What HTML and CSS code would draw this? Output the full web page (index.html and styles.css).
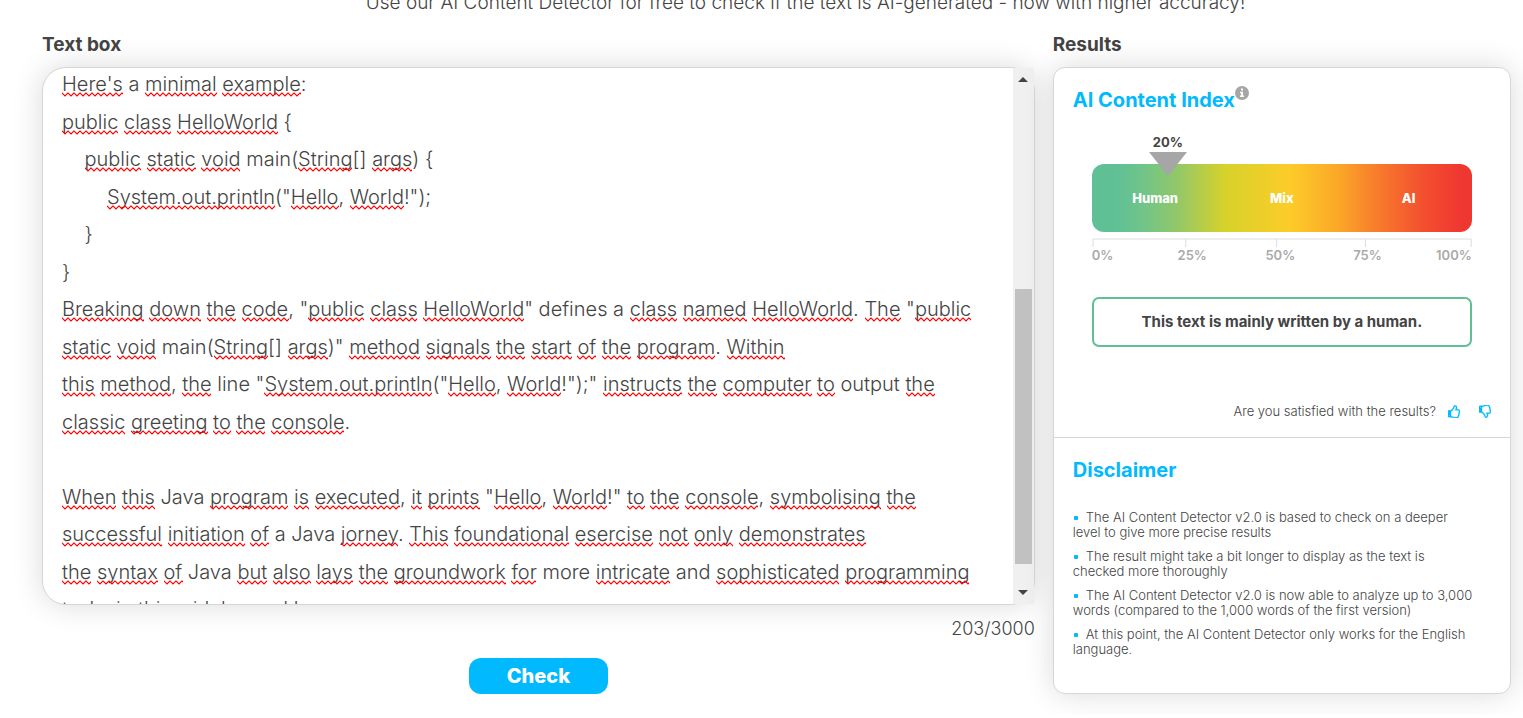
FILE: index.html
```html
<!DOCTYPE html>
<html lang="en">
<head>
<meta charset="utf-8">
<meta name="viewport" content="width=device-width, initial-scale=1">
<title>AI Content Detector</title>
<link rel="stylesheet" href="styles.css">
</head>
<body>
<p class="intro">Use our AI Content Detector for free to check if the text is AI-generated - now with higher accuracy!</p>
<main class="layout">
  <section class="editor">
    <label class="heading" for="source">Text box</label>
    <div class="field">
      <div class="pane">
        <textarea class="source" id="source" spellcheck="false">










Here's a minimal example:
public class HelloWorld {
    public static void main(String[] args) {
        System.out.println("Hello, World!");
    }
}
Breaking down the code, "public class HelloWorld" defines a class named HelloWorld. The "public
static void main(String[] args)" method signals the start of the program. Within
this method, the line "System.out.println("Hello, World!");" instructs the computer to output the
classic greeting to the console.

When this Java program is executed, it prints "Hello, World!" to the console, symbolising the
successful initiation of a Java jorney. This foundational esercise not only demonstrates
the syntax of Java but also lays the groundwork for more intricate and sophisticated programming
tasks in this widely used language.</textarea>
        <div class="mirror" id="mirror" aria-hidden="true"></div>
        <svg class="marks" aria-hidden="true">
          <defs><pattern id="wave" width="6" height="5" patternUnits="userSpaceOnUse"><path d="M-1 0.500L0 1L3 4L6 1L7 0.500" fill="none" stroke="#f00" stroke-width="1.200"/></pattern></defs>
          <g id="marks"></g>
        </svg>
      </div>
      <div class="scrollbar" aria-hidden="true">
        <svg class="step" viewBox="0 0 21 18"><path d="M5 14l5-5 5 5z"/></svg>
        <div class="track"><div class="thumb" id="thumb-bar"></div></div>
        <svg class="step" viewBox="0 0 21 18"><path d="M5 4l5 5 5-5z"/></svg>
      </div>
    </div>
    <div class="counter">203/3000</div>
    <button class="check" type="button">Check</button>
  </section>

  <section class="results">
    <h2 class="heading">Results</h2>
    <div class="card">
      <div class="index">
        <h3 class="title">AI Content Index<svg class="info" viewBox="0 0 14 14" aria-hidden="true"><circle cx="7" cy="7" r="7" fill="#a6a6a6"/><path fill="#fff" d="M6 2.500h2v2H6zM5 5.800h3v3.700h1V11H5V9.500h1V7.200H5z"/></svg></h3>
        <div class="gauge">
          <div class="bar">
            <span>Human</span><span>Mix</span><span>AI</span>
            <div class="marker" style="left:20%">
              <span class="value">20%</span>
              <svg class="arrow" viewBox="0 0 38 24" aria-hidden="true"><path fill="#a6a6a6" d="M0 0h38L19 24z"/></svg>
            </div>
          </div>
          <svg class="ticks" viewBox="0 0 381 9" preserveAspectRatio="none" aria-hidden="true"><path d="M1 9V1h379v8M94 1v8M185 1v8M274 1v8" fill="none" stroke="#ddd"/></svg>
          <div class="scale"><span>0%</span><span>25%</span><span>50%</span><span>75%</span><span>100%</span></div>
          <p class="verdict">This text is mainly written by a human.</p>
        </div>
        <div class="feedback">
          <span>Are you satisfied with the results?</span>
          <button class="vote" type="button" aria-label="Yes"><svg viewBox="0 0 1536 1600" aria-hidden="true"><path id="thumb" d="M256 1344q0-26-19-45t-45-19-45 19-19 45 19 45 45 19 45-19 19-45zm1152-576q0-51-39-89.500t-89-38.500h-352q0-58 48-159.500t48-160.500q0-98-32-145t-128-47q-26 26-38 85t-30.500 125.500-59.500 109.500q-22 23-77 91-4 5-23 30t-31.500 41-34.500 42.500-40 44-38.500 35.500-40 27-35.500 9h-32v640h32q13 0 31.500 3t33 6.500 38 11 35 11.500 35.500 12.500 29 10.500q211 73 342 73h121q192 0 192-167 0-26-5-56 30-16 47.500-52.500t17.500-73.500-18-69q53-50 53-119 0-25-10-55.500t-25-47.500q32-1 53.500-47t21.500-81zm128-1q0 89-49 163 9 33 9 69 0 77-38 144 3 21 3 43 0 101-60 178 1 139-85 219.500t-227 80.500h-129q-96 0-189.500-22.500t-216.500-65.500q-116-40-138-40h-288q-53 0-90.500-37.500t-37.500-90.500v-640q0-53 37.500-90.500t90.500-37.500h274q36-24 137-155 58-75 107-128 24-25 35.500-85.500t30.500-126.500 62-108q39-37 90-37 84 0 151 32.500t102 101.500 35 186q0 93-48 192h176q104 0 180 76t76 179z"/></svg></button>
          <button class="vote" type="button" aria-label="No"><svg viewBox="0 0 1536 1600" aria-hidden="true"><use href="#thumb" transform="translate(0 1600) scale(1 -1)"/></svg></button>
        </div>
      </div>
      <div class="disclaimer">
        <h3 class="title">Disclaimer</h3>
        <ul class="notes">
          <li>The AI Content Detector v2.0 is based to check on a deeper level to give more precise results</li>
          <li>The result might take a bit longer to display as the text is checked more thoroughly</li>
          <li>The AI Content Detector v2.0 is now able to analyze up to 3,000 words (compared to the 1,000 words of the first version)</li>
          <li>At this point, the AI Content Detector only works for the English language.</li>
        </ul>
      </div>
    </div>
  </section>
</main>
<script src="editor.js"></script>
</body>
</html>
```

FILE: styles.css
```css
* { box-sizing: border-box; }

body {
  margin: 0;
  background: #fff;
  color: #444;
  font-family: Inter, "Liberation Sans", sans-serif;
  overflow-x: hidden;
}

h2, h3, p, ul { margin: 0; padding: 0; }

button { border: 0; font-family: inherit; cursor: pointer; }

.intro {
  margin-top: -9px;
  padding: 0 12px 0 100px;
  font-size: 19px;
  font-weight: 300;
  line-height: 24px;
  text-align: center;
}

.layout {
  display: grid;
  grid-template-columns: minmax(0, 13fr) minmax(0, 6fr);
  gap: 18px;
  padding: 18px 12px 20px 42px;
}

.editor, .results { display: flex; flex-direction: column; }

.heading {
  margin-bottom: 10px;
  font-size: 19px;
  font-weight: 700;
  line-height: 24px;
}

.field {
  display: grid;
  grid-template-columns: minmax(0, 1fr) 21px;
  height: 538px;
  border: 1px solid #d6d6d6;
  border-radius: 24px;
  background: #fff;
  box-shadow: 0 0 30px rgba(0, 0, 0, 0.15);
}

.pane {
  position: relative;
  min-height: 0;
  border-radius: 23px 0 0 23px;
  overflow: hidden;
}

.source, .mirror {
  display: block;
  width: 100%;
  margin: 0;
  padding: 20px 0 18px 19px;
  border: 0;
  font: 300 20px/1.875 Inter, "Liberation Sans", sans-serif;
  white-space: pre-wrap;
  overflow-wrap: break-word;
}

.source {
  height: 100%;
  color: #444;
  background: transparent;
  outline: 0;
  resize: none;
  scrollbar-width: none;
}

/* Measures where each word falls; empty once the marks are drawn. */
.mirror { position: absolute; top: 0; left: 0; visibility: hidden; }

.marks {
  position: absolute;
  top: 0;
  left: 0;
  width: 100%;
  height: 100%;
  pointer-events: none;
}

.scrollbar {
  display: flex;
  flex-direction: column;
  min-height: 0;
  background: #f0f0f0;
}

.step { display: block; width: 21px; height: 18px; fill: #444; }

.track { flex: 1; min-height: 0; padding: 0 2px; }

.thumb { position: relative; background: #c1c1c1; }

.counter {
  margin-top: 12px;
  font-size: 18px;
  font-weight: 300;
  line-height: 24px;
  text-align: right;
}

.check {
  align-self: center;
  width: 139px;
  height: 36px;
  margin-top: 17px;
  border-radius: 12px;
  background: #00b9ff;
  color: #fff;
  font-size: 20px;
  font-weight: 800;
}

.card {
  border: 1px solid #d6d6d6;
  border-radius: 12px;
  background: #fff;
  box-shadow: 0 0 30px rgba(0, 0, 0, 0.15);
}

.index { padding: 18px 19px 17px; border-bottom: 1px solid #d6d6d6; }

.title {
  color: #00b9ff;
  font-size: 20px;
  font-weight: 700;
  line-height: 24px;
}

.info { width: 14px; height: 14px; vertical-align: 7px; }

.gauge { padding: 52px 19px 0; }

.bar {
  position: relative;
  display: grid;
  grid-template-columns: repeat(3, 1fr);
  align-items: center;
  height: 68px;
  border-radius: 12px;
  background: linear-gradient(90deg, #5fc096 0%, #5fc096 6%, #6fc48a 13%, #90c76b 22%, #d6d22a 35%, #fdcc29 52%, #fba728 65%, #f8802b 74%, #f3502f 87%, #ef3731 97%);
  color: #fff;
  font-size: 13px;
  font-weight: 800;
  line-height: 16px;
  text-align: center;
}

.marker {
  position: absolute;
  bottom: 56px;
  display: flex;
  flex-direction: column;
  align-items: center;
  transform: translateX(-50%);
}

.value { color: #444; font-size: 13px; font-weight: 700; line-height: 20px; }

.arrow { display: block; width: 38px; height: 24px; }

.ticks { display: block; width: 100%; height: 9px; margin-top: 6px; }

.scale {
  display: grid;
  grid-template-columns: 86fr 88fr 88fr 83fr 36fr;
  color: #aaa;
  font-size: 13px;
  font-weight: 600;
  line-height: 16px;
}

.verdict {
  margin-top: 34px;
  padding: 13px;
  border: 2px solid #5fc096;
  border-radius: 7px;
  font-size: 15px;
  font-weight: 700;
  line-height: 20px;
  text-align: center;
}

.feedback {
  display: flex;
  align-items: center;
  justify-content: flex-end;
  margin-top: 55px;
  font-size: 13px;
  font-weight: 300;
  line-height: 18px;
}

.vote { width: 12px; height: 14px; margin-left: 12px; padding: 0; background: none; }

.vote + .vote { margin-left: 19px; }

.vote svg {
  display: block;
  width: 12px;
  height: 13px;
  fill: #00b9ff;
  stroke: #00b9ff;
  stroke-width: 50;
}

.disclaimer { padding: 20px 19px 36px; }

.notes {
  display: grid;
  gap: 9px;
  margin-top: 28px;
  padding-right: 16px;
  list-style: none;
  font-size: 13px;
  font-weight: 300;
  line-height: 15px;
}

.notes li::before {
  content: "";
  display: inline-block;
  width: 4px;
  height: 4px;
  margin: 0 8px 2px 1px;
  border-radius: 1px;
  background: #00b9ff;
}

@media (max-width: 900px) {
  .layout { grid-template-columns: minmax(0, 1fr); padding: 18px 12px; }
  .intro { padding: 0 12px; }
}
```

FILE: editor.js
```js
const source = document.getElementById("source");
const mirror = document.getElementById("mirror");
const marks = document.getElementById("marks");
const thumb = document.getElementById("thumb-bar");
const accepted = new Set(["a", "main", "defines", "Java", "line", "output", "more", "and"]);
const SVG = "http://www.w3.org/2000/svg";

function mark() {
  for (const part of source.value.split(/([A-Za-z]+(?:['.][A-Za-z]+)*)/)) {
    const missing = /^[A-Za-z]/.test(part) && !accepted.has(part);
    const piece = document.createElement(missing ? "u" : "span");
    piece.textContent = part;
    mirror.append(piece);
  }
  const base = mirror.getBoundingClientRect();
  const waves = [];
  for (const word of mirror.querySelectorAll("u")) {
    for (const box of word.getClientRects()) {
      const wave = document.createElementNS(SVG, "rect");
      wave.setAttribute("width", Math.round(box.width));
      wave.setAttribute("height", 5);
      wave.setAttribute("fill", "url(#wave)");
      const x = Math.round(box.left - base.left);
      const y = Math.round(box.bottom - base.top) - 4;
      wave.setAttribute("transform", `translate(${x} ${y})`);
      waves.push(wave);
    }
  }
  marks.replaceChildren(...waves);
  mirror.textContent = "";
  follow();
}

// Keep the marks and the scrollbar thumb in step with the text.
function follow() {
  const track = thumb.parentElement.clientHeight;
  marks.setAttribute("transform", `translate(0 ${-source.scrollTop})`);
  thumb.style.height = `${Math.round(track * source.clientHeight / source.scrollHeight)}px`;
  thumb.style.top = `${Math.round(track * source.scrollTop / source.scrollHeight)}px`;
}

source.addEventListener("input", mark);
source.addEventListener("scroll", follow);
window.addEventListener("resize", mark);
source.scrollTop = 397;
mark();
```
